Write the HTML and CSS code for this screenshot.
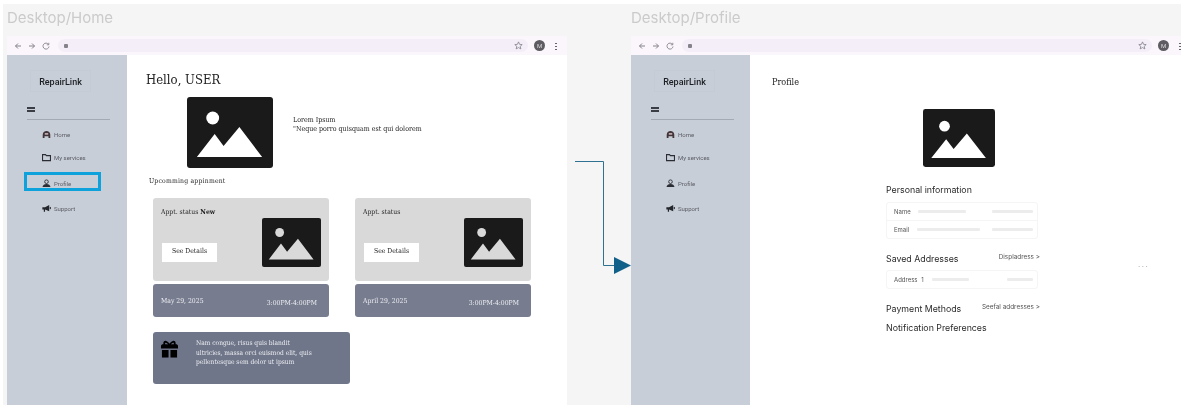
FILE: index.html
```html
<!DOCTYPE html>
<html lang="en">
<head>
    <meta charset="UTF-8">
    <meta name="viewport" content="width=device-width, initial-scale=1.0">
    <title>RepairLink flows</title>
    <link rel="stylesheet" href="styles.css">
</head>
<body>
    <svg class="defs" aria-hidden="true">
        <symbol id="picture" viewBox="0 0 87 71" preserveAspectRatio="none">
            <rect width="87" height="71" rx="3" fill="#1a1a1a"/>
            <circle cx="26" cy="21" r="6.5" fill="currentColor"/>
            <polygon points="10,60 28,37 37,49 53,30 76,60" fill="currentColor"/>
        </symbol>
        <symbol id="i-home" viewBox="0 0 10 10">
            <path d="M5 1.200C2.600 1.200 1 2.800.8 5v3.800h2V7h4.400v1.800h2V5C9 2.800 7.400 1.200 5 1.200z" fill="#43343a"/>
            <rect x="3" y="3.400" width="4" height="1.800" rx=".4" fill="#b9a9ad"/>
        </symbol>
        <symbol id="i-folder" viewBox="0 0 10 10">
            <path d="M.6 1.800h3.300l1 1.100h4.500v5.600H.6z" fill="none" stroke="#2a2d33" stroke-width="1.200"/>
        </symbol>
        <symbol id="i-user" viewBox="0 0 10 10">
            <circle cx="5" cy="3" r="2" fill="none" stroke="#2a2d33" stroke-width="1"/>
            <path d="M.6 9c.3-2.500 2-3.400 4.400-3.400S9.100 6.500 9.400 9z" fill="#2a2d33"/>
        </symbol>
        <symbol id="i-horn" viewBox="0 0 10 10">
            <path d="M.4 3.500h3L8 1v7L3.400 6.200v2.300H2V6.200H.4z" fill="#23262b"/>
            <rect x="8.600" y="3.300" width="1.200" height="2.400" fill="#23262b"/>
        </symbol>
        <symbol id="browser-back" viewBox="0 0 8 8">
            <path d="M7 4H1.500M4 1.500 1.500 4 4 6.500" fill="none" stroke="#85828c" stroke-width="1"/>
        </symbol>
        <symbol id="browser-next" viewBox="0 0 8 8">
            <path d="M1 4h5.500M4 1.500 6.500 4 4 6.500" fill="none" stroke="#85828c" stroke-width="1"/>
        </symbol>
        <symbol id="browser-reload" viewBox="0 0 8 8">
            <path d="M6.500 2.400A3 3 0 1 0 7 4.500M6.800.8v2H4.800" fill="none" stroke="#85828c" stroke-width=".9"/>
        </symbol>
        <symbol id="browser-star" viewBox="0 0 10 10">
            <path d="m5 1 1.200 2.700 2.900.3-2.200 1.900.7 2.900L5 7.300 2.400 8.800l.7-2.900L.9 4l2.900-.3z" fill="none" stroke="#85828c" stroke-width=".9"/>
        </symbol>
    </svg>

    <div class="canvas">
        <section class="frame">
            <h2 class="frame-title">Desktop/Home</h2>
            <div class="browser">
                <div class="browser-bar">
                    <svg class="bar-icon"><use href="#browser-back"/></svg>
                    <svg class="bar-icon"><use href="#browser-next"/></svg>
                    <svg class="bar-icon"><use href="#browser-reload"/></svg>
                    <div class="address">
                        <span class="lock"></span>
                        <svg class="star"><use href="#browser-star"/></svg>
                    </div>
                    <span class="avatar">M</span>
                    <span class="dots"></span>
                </div>
                <div class="browser-body">
                    <aside class="sidebar">
                        <div class="logo">RepairLink</div>
                        <div class="burger"></div>
                        <nav class="nav">
                            <a class="nav-item"><svg class="nav-icon"><use href="#i-home"/></svg>Home</a>
                            <a class="nav-item"><svg class="nav-icon"><use href="#i-folder"/></svg>My services</a>
                            <a class="nav-item"><svg class="nav-icon"><use href="#i-user"/></svg>Profile</a>
                            <a class="nav-item"><svg class="nav-icon"><use href="#i-horn"/></svg>Support</a>
                        </nav>
                        <div class="nav-highlight"></div>
                    </aside>
                    <main class="home">
                        <h1 class="hello">Hello, USER</h1>
                        <div class="intro">
                            <svg class="intro-pic"><use href="#picture" color="#fff"/></svg>
                            <p class="intro-text">Lorem Ipsum<br>"Neque porro quisquam est qui dolorem</p>
                        </div>
                        <h3 class="upcoming">Upcomming appinment</h3>
                        <div class="appts">
                            <div class="appt">
                                <div class="appt-card">
                                    <div class="appt-left">
                                        <p class="appt-status">Appt. status <b>New</b></p>
                                        <a class="details">See Details</a>
                                    </div>
                                    <svg class="appt-pic"><use href="#picture" color="#d9d9d9"/></svg>
                                </div>
                                <div class="appt-date">
                                    <span class="date">May 29, 2025</span>
                                    <span class="time">3:00PM-4:00PM</span>
                                </div>
                            </div>
                            <div class="appt">
                                <div class="appt-card">
                                    <div class="appt-left">
                                        <p class="appt-status">Appt. status</p>
                                        <a class="details">See Details</a>
                                    </div>
                                    <svg class="appt-pic"><use href="#picture" color="#d9d9d9"/></svg>
                                </div>
                                <div class="appt-date">
                                    <span class="date">April 29, 2025</span>
                                    <span class="time">3:00PM-4:00PM</span>
                                </div>
                            </div>
                        </div>
                        <div class="promo">
                            <svg class="gift" viewBox="0 0 20 19">
                                <path d="M1 6.500C1 5 2 4.500 3.500 4.500c-.5-3 1.500-4 3-3.500C8 1.500 9.500 3 10 4c.5-1 2-2.500 3.500-3 1.500-.5 3.500.500 3 3.500 1.500 0 2.500.500 2.500 2V9H1z" fill="#000"/>
                                <path d="M5.500 4.500c-.3-1 .2-1.700 1-1.400.8.300 1.500.8 2 1.400zM14.500 4.500c.3-1 -.2-1.700-1-1.400-.8.300-1.500.8-2 1.400z" fill="#70768a"/>
                                <rect x="2" y="10.500" width="7" height="8" fill="#000"/>
                                <rect x="11" y="10.500" width="7" height="8" fill="#000"/>
                            </svg>
                            <p class="promo-text">Nam congue, risus quis blandit<br>ultricies, massa orci euismod elit, quis<br>pellentesque sem dolor ut ipsum</p>
                        </div>
                    </main>
                </div>
            </div>
        </section>

        <section class="frame frame-profile">
            <h2 class="frame-title">Desktop/Profile</h2>
            <div class="browser">
                <div class="browser-bar">
                    <svg class="bar-icon"><use href="#browser-back"/></svg>
                    <svg class="bar-icon"><use href="#browser-next"/></svg>
                    <svg class="bar-icon"><use href="#browser-reload"/></svg>
                    <div class="address">
                        <span class="lock"></span>
                        <svg class="star"><use href="#browser-star"/></svg>
                    </div>
                    <span class="avatar">M</span>
                    <span class="dots"></span>
                </div>
                <div class="browser-body">
                    <aside class="sidebar">
                        <div class="logo">RepairLink</div>
                        <div class="burger"></div>
                        <nav class="nav">
                            <a class="nav-item"><svg class="nav-icon"><use href="#i-home"/></svg>Home</a>
                            <a class="nav-item"><svg class="nav-icon"><use href="#i-folder"/></svg>My services</a>
                            <a class="nav-item"><svg class="nav-icon"><use href="#i-user"/></svg>Profile</a>
                            <a class="nav-item"><svg class="nav-icon"><use href="#i-horn"/></svg>Support</a>
                        </nav>
                    </aside>
                    <main class="profile">
                        <h1 class="profile-title">Profile</h1>
                        <svg class="profile-pic"><use href="#picture" color="#fff"/></svg>
                        <div class="profile-col">
                            <div class="section-head first">
                                <h3>Personal information</h3>
                            </div>
                            <div class="info-box">
                                <div class="info-row">
                                    <span class="info-label">Name</span>
                                    <span class="skeleton sk-name"></span>
                                    <span class="skeleton sk-end"></span>
                                </div>
                                <div class="info-row">
                                    <span class="info-label">Email</span>
                                    <span class="skeleton sk-email"></span>
                                    <span class="skeleton sk-end"></span>
                                </div>
                            </div>
                            <div class="section-head saved">
                                <h3>Saved Addresses</h3>
                                <a class="section-link">Displadress &gt;</a>
                            </div>
                            <div class="info-box">
                                <div class="info-row">
                                    <span class="info-label wide">Address 1</span>
                                    <span class="skeleton sk-addr"></span>
                                    <span class="skeleton sk-end short"></span>
                                </div>
                            </div>
                            <div class="section-head payment">
                                <h3>Payment Methods</h3>
                                <a class="section-link">Seefal addresses &gt;</a>
                            </div>
                            <div class="section-head notify">
                                <h3>Notification Preferences</h3>
                            </div>
                        </div>
                        <span class="more">...</span>
                    </main>
                </div>
            </div>
        </section>

        <!-- connector between the two frames -->
        <svg class="connector" width="60" height="116" viewBox="0 0 60 116">
            <path d="M0 .5h28.500V104.500H40" fill="none" stroke="#2f7191" stroke-width="1"/>
            <polygon points="39,96 56,104.500 39,113" fill="#10608a"/>
        </svg>
    </div>
</body>
</html>
```

FILE: styles.css
```css
/* Board */
body {
    margin: 0;
    background: #fff;
    font-family: 'Roboto', sans-serif;
    overflow: hidden;
}

.defs {
    display: none;
}

.canvas {
    position: relative;
    display: flex;
    gap: 64px;
    height: 401px;
    margin: 4px 0 0 3px;
    padding-left: 4px;
    background: #f5f5f5;
    overflow: hidden;
    filter: blur(0.5px);
}

.frame {
    width: 560px;
    flex-shrink: 0;
}

.frame-title {
    margin: 0;
    height: 32px;
    line-height: 28px;
    font-family: 'Inter', sans-serif;
    font-size: 15px;
    font-weight: 400;
    color: #cbcbcb;
}

/* Browser chrome */
.browser {
    height: 369px;
    display: flex;
    flex-direction: column;
}

.browser-bar {
    height: 19px;
    display: flex;
    align-items: center;
    padding-left: 7px;
    background: #fbf6fc;
}

.bar-icon {
    width: 8px;
    height: 8px;
    margin-right: 6px;
}

.address {
    flex: 1;
    height: 13px;
    margin-left: 2px;
    padding: 0 5px 0 6px;
    display: flex;
    align-items: center;
    justify-content: space-between;
    background: #f3eef8;
    border-radius: 7px;
}

.lock {
    width: 4px;
    height: 4px;
    background: #85828c;
    border-radius: 1px;
}

.star {
    width: 9px;
    height: 9px;
}

.avatar {
    width: 11px;
    height: 11px;
    margin-left: 6px;
    border-radius: 50%;
    background: #5e5b63;
    color: #ddd;
    font-size: 6px;
    line-height: 11px;
    text-align: center;
}

.dots {
    width: 2px;
    height: 8px;
    margin: 0 10px 0 10px;
    background: radial-gradient(circle, #66636b 1px, transparent 1px) 0 0 / 2px 3px;
}

.browser-body {
    flex: 1;
    display: flex;
    background: #fff;
}

/* Sidebar */
.sidebar {
    position: relative;
    width: 120px;
    flex-shrink: 0;
    background: #c8ced7;
}

.frame-profile .sidebar {
    width: 119px;
}

.logo {
    width: 61px;
    height: 22px;
    margin: 15px 0 0 23px;
    line-height: 22px;
    text-align: center;
    font-size: 9px;
    font-weight: 500;
    color: #1c1f24;
    border: 1px solid #c5cbd4;
    box-sizing: border-box;
}

.burger {
    width: 8px;
    height: 1px;
    margin: 15px 0 0 20px;
    border-top: 2px solid #3a3d43;
    border-bottom: 2px solid #3a3d43;
}

.nav {
    margin: 7px 0 0 20px;
    padding: 7px 0 0 15px;
    width: 68px;
    border-top: 1px solid #a5a9b3;
}

.nav-item {
    display: flex;
    align-items: center;
    gap: 3px;
    height: 14px;
    margin-bottom: 9px;
    font-size: 6px;
    color: #5a5d65;
}

.nav-item:nth-child(2) {
    margin-bottom: 12px;
}

.nav-item:nth-child(3) {
    margin-bottom: 11px;
}

.nav-icon {
    width: 9px;
    height: 9px;
    flex-shrink: 0;
}

.nav-highlight {
    position: absolute;
    left: 17px;
    top: 117px;
    width: 77px;
    height: 19px;
    box-sizing: border-box;
    border: 3px solid #0ea2dc;
}

/* Home */
.home {
    flex: 1;
    padding-left: 19px;
    font-family: 'DejaVu Serif', serif;
    font-stretch: condensed;
    color: #222;
}

.hello {
    margin: 17px 0 0;
    height: 16px;
    line-height: 16px;
    font-size: 13px;
    font-weight: 400;
}

.intro {
    display: flex;
    align-items: center;
    gap: 20px;
    margin: 9px 0 0 41px;
}

.intro-pic {
    width: 86px;
    height: 71px;
}

.intro-text {
    margin: 0 0 15px;
    font-size: 7px;
    line-height: 9.500px;
}

.upcoming {
    margin: 9px 0 0 3px;
    height: 9px;
    line-height: 9px;
    font-size: 6.800px;
    font-weight: 400;
    letter-spacing: 0.2px;
}

.appts {
    display: flex;
    gap: 26px;
    margin: 12px 0 0 7px;
}

.appt {
    width: 176px;
}

.appt-card {
    display: flex;
    justify-content: space-between;
    height: 83px;
    box-sizing: border-box;
    padding: 10px 8px 0 8px;
    background: #d9d9d9;
    border-radius: 3px;
}

.appt-status {
    margin: 0;
    font-size: 6.800px;
    line-height: 9px;
}

.details {
    display: block;
    width: 55px;
    height: 19px;
    margin: 26px 0 0 1px;
    line-height: 17px;
    text-align: center;
    font-size: 6.800px;
    background: #fff;
}

.appt-pic {
    width: 59px;
    height: 49px;
    margin-top: 10px;
}

.appt-date {
    display: flex;
    justify-content: space-between;
    height: 33px;
    margin-top: 3px;
    box-sizing: border-box;
    padding: 13px 12px 0 8px;
    background: #777c8f;
    border-radius: 3px;
    color: #eceef2;
    font-size: 6.800px;
    line-height: 9px;
}

.time {
    padding-top: 2px;
}

.promo {
    display: flex;
    width: 197px;
    height: 52px;
    margin: 15px 0 0 7px;
    box-sizing: border-box;
    padding: 8px 10px 0 7px;
    background: #70768a;
    border-radius: 3px;
}

.gift {
    width: 19px;
    height: 18px;
    flex-shrink: 0;
}

.promo-text {
    margin: -1px 0 0 17px;
    font-size: 6.600px;
    line-height: 9.500px;
    color: #eceef2;
    white-space: nowrap;
}

/* Profile */
.profile {
    position: relative;
    flex: 1;
    display: flex;
    flex-direction: column;
    font-family: 'Inter', sans-serif;
    color: #2a2a2a;
}

.profile-title {
    margin: 22px 0 0 22px;
    height: 10px;
    line-height: 10px;
    font-family: 'DejaVu Serif', serif;
    font-stretch: condensed;
    font-size: 9px;
    font-weight: 400;
    color: #222;
}

.profile-pic {
    width: 72px;
    height: 58px;
    margin: 22px 0 0 173px;
}

.profile-col {
    width: 154px;
    margin-left: 136px;
}

.section-head {
    display: flex;
    align-items: center;
    justify-content: space-between;
    height: 10px;
}

.section-head h3 {
    margin: 0;
    font-size: 8.800px;
    font-weight: 400;
    white-space: nowrap;
}

.section-head.first {
    margin-top: 17px;
}

.section-head.saved {
    margin-top: 14px;
}

.section-head.payment {
    margin-top: 14px;
}

.section-head.notify {
    margin-top: 9px;
}

.section-link {
    font-size: 6.400px;
    color: #555;
    white-space: nowrap;
}

.saved .section-link,
.payment .section-link {
    margin-top: -2px;
}

.info-box {
    width: 152px;
    margin-top: 7px;
    border: 1px solid #f5f5f5;
    border-radius: 3px;
    box-sizing: border-box;
}

.first + .info-box {
    margin-top: 8px;
}

.info-row {
    display: flex;
    align-items: center;
    height: 17px;
    padding: 0 4px 0 7px;
}

.info-row + .info-row {
    border-top: 1px solid #f5f5f5;
}

.info-label {
    width: 24px;
    font-size: 6px;
    color: #555;
}

.info-label.wide {
    width: 38px;
    word-spacing: 2px;
}

.skeleton {
    height: 3px;
    background: #ececec;
    border-radius: 1px;
}

.sk-name {
    width: 48px;
}

.sk-email {
    width: 63px;
    margin-left: -1px;
}

.sk-addr {
    width: 37px;
}

.sk-end {
    width: 41px;
    margin-left: auto;
}

.sk-end.short {
    width: 26px;
}

.more {
    position: absolute;
    left: 388px;
    top: 204px;
    font-size: 8px;
    letter-spacing: 1.500px;
    color: #999;
}

/* Connector */
.connector {
    position: absolute;
    left: 572px;
    top: 157px;
}
```
